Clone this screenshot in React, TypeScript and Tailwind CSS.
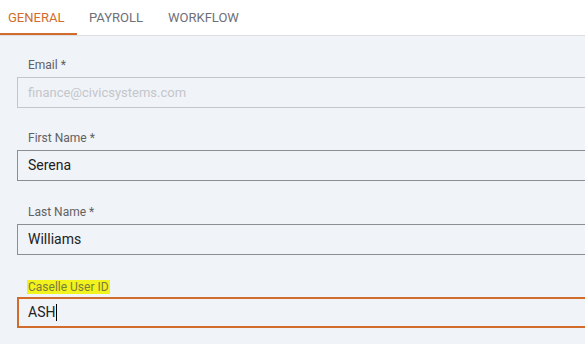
import { useState } from "react";

const tabs = ["GENERAL", "PAYROLL", "WORKFLOW"];

export default function App() {
  const [active, setActive] = useState("GENERAL");

  return (
    <main className="h-[344px] w-[585px] overflow-hidden bg-[#f0f3f8] font-['Roboto',sans-serif]">
      {/* Tabs */}
      <nav className="flex h-[36px] border-b border-[#dcdee2] bg-white">
        {tabs.map((t, i) => (
          <button
            key={t}
            onClick={() => setActive(t)}
            className={`flex h-full items-center text-[13px] ${
              i === 0 ? "w-[77px] pl-[8px]" : "pl-[12px] pr-[13px]"
            } ${t === active ? "border-b-2 border-[#d26c2c] pt-[2px] text-[#d26c2c]" : "text-[#6e7079]"}`}
          >
            {t}
          </button>
        ))}
      </nav>

      {/* Form */}
      <section className="w-[640px] pl-[17px] pt-[22px]">
        <Field label="Email *" value="finance@civicsystems.com" disabled className="mb-[23px]" />
        <Field label="First Name *" value="Serena" className="mb-[24px]" />
        <Field label="Last Name *" value="Williams" className="mb-[25px]" />

        <div>
          <label className="ml-[10px] block w-fit bg-[#f2f21c] px-[1px] text-[12px] leading-[14px] text-[#7a7c3c]">
            Caselle User ID
          </label>
          <div className="mt-[3px] flex h-[31px] items-center border-2 border-[#d26c2c] pl-[9px]">
            <span className="text-[14px] text-[#222]">ASH</span>
            <span className="ml-[1px] h-[17px] w-[1px] bg-black" />
          </div>
        </div>
      </section>
    </main>
  );
}

function Field({
  label,
  value,
  disabled,
  className,
}: {
  label: string;
  value: string;
  disabled?: boolean;
  className?: string;
}) {
  return (
    <div className={className}>
      <label className="ml-[11px] block text-[12px] leading-[15px] text-[#616161]">{label}</label>
      <div
        className={`mt-[4px] flex h-[31px] items-center border pl-[10px] ${
          disabled ? "border-[#c4c6ca]" : "border-[#8b8e93]"
        }`}
      >
        {disabled ? (
          <span className="text-[13px] text-[#c4c6ca]">{value}</span>
        ) : (
          <span className="text-[14px] text-[#222]">{value}</span>
        )}
      </div>
    </div>
  );
}
